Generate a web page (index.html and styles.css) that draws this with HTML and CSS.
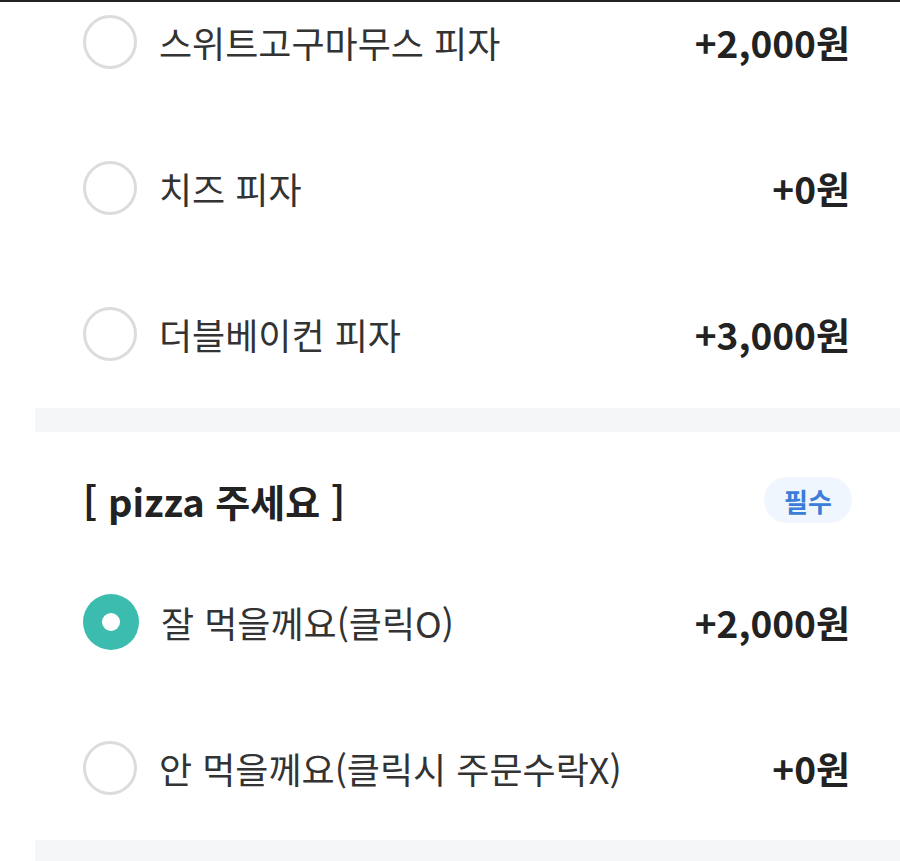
FILE: index.html
```html
<!DOCTYPE html>
<html lang="ko">
<head>
<meta charset="utf-8">
<title>옵션 선택</title>
<link rel="stylesheet" href="styles.css">
</head>
<body>
<div class="topline"></div>
<div class="page">
  <section class="group group-first">
    <div class="option">
      <span class="radio"></span>
      <span class="label">스위트고구마무스 피자</span>
      <span class="price">+2,000원</span>
    </div>
    <div class="option">
      <span class="radio"></span>
      <span class="label">치즈 피자</span>
      <span class="price">+0원</span>
    </div>
    <div class="option">
      <span class="radio"></span>
      <span class="label">더블베이컨 피자</span>
      <span class="price">+3,000원</span>
    </div>
  </section>
  <div class="band"></div>
  <section class="group group-second">
    <div class="group-head">
      <h2 class="group-title">[ pizza 주세요 ]</h2>
      <span class="badge">필수</span>
    </div>
    <div class="option">
      <span class="radio radio-on"></span>
      <span class="label">잘 먹을께요(클릭O)</span>
      <span class="price">+2,000원</span>
    </div>
    <div class="option">
      <span class="radio"></span>
      <span class="label">안 먹을께요(클릭시 주문수락X)</span>
      <span class="price">+0원</span>
    </div>
  </section>
  <div class="band band-bottom"></div>
</div>
</body>
</html>
```
FILE: styles.css
```css
* { box-sizing: border-box; }
html, body { margin: 0; padding: 0; background: #fff; }
body {
  font-family: "Noto Sans CJK KR", "Noto Sans", sans-serif;
  color: #333;
  overflow: hidden;
  height: 861px;
}
.topline { height: 2px; background: #222; }
.page { padding-left: 35px; }
.group {
  display: flex;
  flex-direction: column;
  gap: 66px;
  padding: 0 50px 0 48px;
}
.group-first { padding-bottom: 34px; }
.group-second { padding-top: 46px; padding-bottom: 32px; }
.option {
  height: 80px;
  display: flex;
  align-items: center;
}
.radio {
  width: 54px;
  height: 54px;
  border-radius: 50%;
  border: 3px solid #dcdcdc;
  flex: none;
  display: flex;
  align-items: center;
  justify-content: center;
}
.radio-on {
  width: 56px;
  height: 56px;
  border: none;
  background: #3bbcae;
}
.radio-on::after {
  content: "";
  width: 18px;
  height: 18px;
  border-radius: 50%;
  background: #fff;
}
.label {
  margin-left: 22px;
  font-size: 36px;
  color: #333;
  flex: 1;
  white-space: nowrap;
}
.price {
  font-size: 37px;
  font-weight: 700;
  color: #222;
  white-space: nowrap;
}
.band { height: 24px; background: #f5f6f8; }
.band-bottom { height: 30px; }
.group-head {
  height: 44px;
  display: flex;
  align-items: center;
  justify-content: space-between;
  margin-bottom: -6px;
}
.group-title {
  margin: 0;
  font-size: 38px;
  font-weight: 700;
  color: #222;
}
.badge {
  width: 88px;
  height: 46px;
  border-radius: 23px;
  background: #f0f6fd;
  color: #3b7dd8;
  font-size: 26px;
  font-weight: 700;
  display: flex;
  align-items: center;
  justify-content: center;
  margin-right: -2px;
}
```
